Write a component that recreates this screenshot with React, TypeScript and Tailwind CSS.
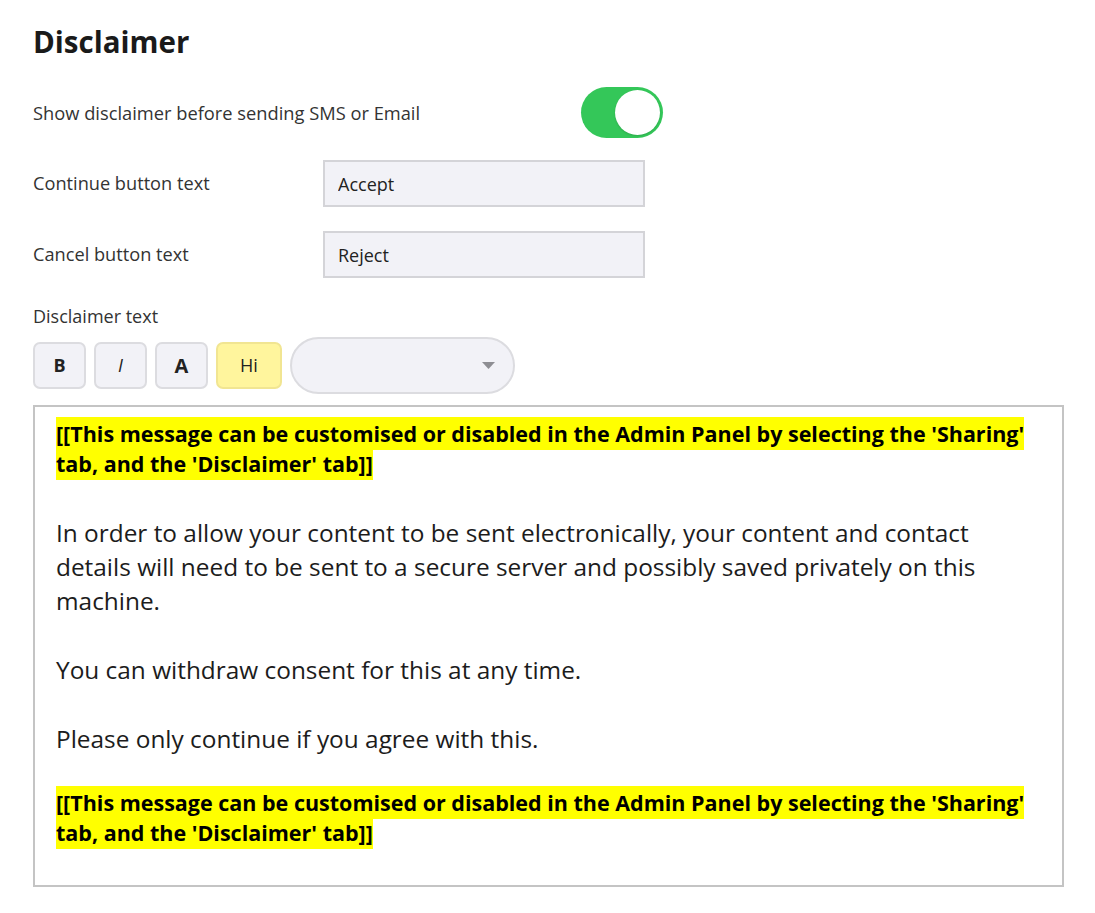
import React from 'react';

// --- Small building blocks ---

const Toggle: React.FC<{ on: boolean }> = ({ on }) => (
  <div
    className={`flex h-[51px] w-[82px] items-center rounded-full px-[3px] ${
      on ? 'justify-end bg-[#34c759]' : 'justify-start bg-[#e5e5ea]'
    }`}
  >
    <div className="h-[45px] w-[45px] rounded-full bg-white shadow-[0_1px_2px_rgba(0,0,0,0.15)]" />
  </div>
);

const FieldRow: React.FC<{ label: string; value: string }> = ({ label, value }) => (
  <div className="flex items-center">
    <label className="w-[290px] text-[18.2px] text-[#333]">{label}</label>
    <input
      readOnly
      value={value}
      className="h-[47px] w-[322px] border-2 border-[#d4d4d8] bg-[#f2f2f7] px-[13px] text-[18px] text-[#222] outline-none"
    />
  </div>
);

const ToolButton: React.FC<{ children: React.ReactNode; className?: string; highlight?: boolean }> = ({
  children,
  className = '',
  highlight,
}) => (
  <button
    className={`flex h-[47px] items-center justify-center rounded-[7px] border-2 text-[18px] text-[#222] ${
      highlight ? 'w-[66px] border-[#f1e592] bg-[#fff59d]' : 'w-[53px] border-[#dcdce0] bg-[#f2f2f7]'
    } ${className}`}
  >
    {children}
  </button>
);

const Highlight: React.FC<{ children: React.ReactNode }> = ({ children }) => (
  <p className="text-[21.5px] font-bold leading-[30px] text-black">
    <span className="bg-[#ffff00] py-[2px] [box-decoration-break:clone]">{children}</span>
  </p>
);

// --- Page ---

export default function App() {
  return (
    <div className="min-h-screen bg-white pl-[33px] pr-[31px] pt-[22px] font-['Open_Sans',sans-serif]">
      <h1 className="text-[29.5px] font-bold leading-[40px] text-[#1a1a1a]">Disclaimer</h1>

      <div className="mt-[25px] flex w-[630px] items-center justify-between">
        <span className="text-[18.3px] text-[#333]">Show disclaimer before sending SMS or Email</span>
        <Toggle on />
      </div>

      <div className="mt-[22px]">
        <FieldRow label="Continue button text" value="Accept" />
      </div>
      <div className="mt-[24px]">
        <FieldRow label="Cancel button text" value="Reject" />
      </div>

      <div className="mt-[26px] text-[18px] leading-[24px] text-[#333]">Disclaimer text</div>

      <div className="mt-[9px] flex h-[57px] items-center gap-[8px]">
        <ToolButton className="font-bold">B</ToolButton>
        <ToolButton className="italic">I</ToolButton>
        <ToolButton className="font-bold text-[20px]">A</ToolButton>
        <ToolButton highlight>Hi</ToolButton>
        <div className="flex h-[57px] w-[225px] items-center justify-end rounded-full border-2 border-[#dcdce0] bg-[#f2f2f7] pr-[18px]">
          <svg width="13" height="7" viewBox="0 0 13 7">
            <path d="M0 0h13L6.5 7z" fill="#8e8e93" />
          </svg>
        </div>
      </div>

      <div className="mt-[11px] w-[1031px] border-2 border-[#c4c4c4] px-[21px] pb-[37px] pt-[12px]">
        <Highlight>
          [[This message can be customised or disabled in the Admin Panel by selecting the 'Sharing'
          <br />
          tab, and the 'Disclaimer' tab]]
        </Highlight>

        <div className="mt-[37px] text-[24.4px] leading-[34px] text-[#1c1c1c]">
          <p>
            In order to allow your content to be sent electronically, your content and contact
            <br />
            details will need to be sent to a secure server and possibly saved privately on this
            <br />
            machine.
          </p>
          <p className="mt-[35px]">You can withdraw consent for this at any time.</p>
          <p className="mt-[35px]">Please only continue if you agree with this.</p>
        </div>

        <div className="mt-[32px]">
          <Highlight>
            [[This message can be customised or disabled in the Admin Panel by selecting the 'Sharing'
            <br />
            tab, and the 'Disclaimer' tab]]
          </Highlight>
        </div>
      </div>
    </div>
  );
}
